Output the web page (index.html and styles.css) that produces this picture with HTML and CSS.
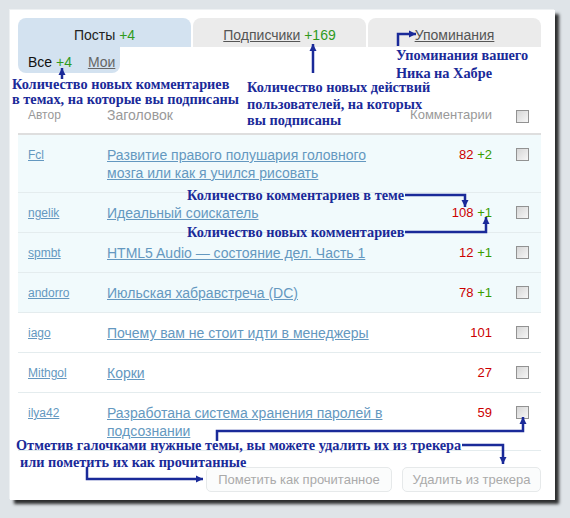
FILE: index.html
```html
<!DOCTYPE html>
<html>
<head>
    <title>Трекер</title>
    <link rel="stylesheet" href="styles.css">
</head>
<body>
<div class="page">
    <div class="panel">
        <div class="tabs">
            <div class="tab active">Посты <span class="plus">+4</span></div>
            <div class="tab"><a href="#">Подписчики</a> <span class="plus">+169</span></div>
            <div class="tab"><a href="#">Упоминания</a></div>
        </div>
        <div class="subtabs">
            <span class="current">Все <span class="plus">+4</span></span>
            <a href="#">Мои</a>
        </div>

        <table class="tracker">
            <thead>
                <tr>
                    <th class="author">Автор</th>
                    <th class="title">Заголовок</th>
                    <th class="count">Комментарии</th>
                    <th class="check"><span class="box"></span></th>
                </tr>
            </thead>
            <tbody>
                <tr class="new">
                    <td class="author"><a href="#">Fcl</a></td>
                    <td class="title"><a href="#">Развитие правого полушария головного мозга или как я учился рисовать</a></td>
                    <td class="count"><span class="total">82</span> <span class="plus">+2</span></td>
                    <td class="check"><span class="box"></span></td>
                </tr>
                <tr class="new">
                    <td class="author"><a href="#">ngelik</a></td>
                    <td class="title"><a href="#">Идеальный соискатель</a></td>
                    <td class="count"><span class="total">108</span> <span class="plus">+1</span></td>
                    <td class="check"><span class="box"></span></td>
                </tr>
                <tr class="new">
                    <td class="author"><a href="#">spmbt</a></td>
                    <td class="title"><a href="#">HTML5 Audio — состояние дел. Часть 1</a></td>
                    <td class="count"><span class="total">12</span> <span class="plus">+1</span></td>
                    <td class="check"><span class="box"></span></td>
                </tr>
                <tr class="new">
                    <td class="author"><a href="#">andorro</a></td>
                    <td class="title"><a href="#">Июльская хабравстреча (DC)</a></td>
                    <td class="count"><span class="total">78</span> <span class="plus">+1</span></td>
                    <td class="check"><span class="box"></span></td>
                </tr>
                <tr>
                    <td class="author"><a href="#">iago</a></td>
                    <td class="title"><a href="#">Почему вам не стоит идти в менеджеры</a></td>
                    <td class="count"><span class="total">101</span></td>
                    <td class="check"><span class="box"></span></td>
                </tr>
                <tr>
                    <td class="author"><a href="#">Mithgol</a></td>
                    <td class="title"><a href="#">Корки</a></td>
                    <td class="count"><span class="total">27</span></td>
                    <td class="check"><span class="box"></span></td>
                </tr>
                <tr>
                    <td class="author"><a href="#">ilya42</a></td>
                    <td class="title"><a href="#">Разработана система хранения паролей в подсознании</a></td>
                    <td class="count"><span class="total">59</span></td>
                    <td class="check"><span class="box"></span></td>
                </tr>
            </tbody>
        </table>

        <div class="actions">
            <button class="btn">Пометить как прочитанное</button>
            <button class="btn">Удалить из трекера</button>
        </div>
    </div>

    <!-- annotations drawn over the screenshot -->
    <div class="notes">
        <svg class="arrows" width="570" height="518" viewBox="0 0 570 518">
            <defs>
                <marker id="head" markerUnits="userSpaceOnUse" markerWidth="8" markerHeight="8" refX="7" refY="4" orient="auto">
                    <path d="M0 0.5 L7 4 L0 7.5 Z" fill="#1a2a99"/>
                </marker>
            </defs>
            <g fill="none" stroke="#1a2a99" stroke-width="2.5" marker-end="url(#head)">
                <path d="M62 79 V68"/>
                <path d="M313 73 V44"/>
                <path d="M398 46 V34 H416"/>
                <path d="M405 195 H465 V207"/>
                <path d="M405 232 H486 V217"/>
                <path d="M217 441 V431 H523 V417"/>
                <path d="M462 445 H503 V464"/>
                <path d="M87 467 V479 H203"/>
            </g>
        </svg>
        <div class="note n1">Количество новых комментариев<br>в темах, на которые вы подписаны</div>
        <div class="note n2">Количество новых действий<br>пользователей, на которых<br>вы подписаны</div>
        <div class="note n3">Упоминания вашего<br>Ника на Хабре</div>
        <div class="note n4">Количество комментариев в теме</div>
        <div class="note n5">Количество новых комментариев</div>
        <div class="note n6">Отметив галочками нужные темы, вы можете удалить их из трекера</div>
        <div class="note n7">или пометить их как прочитанные</div>
    </div>
</div>
</body>
</html>
```

FILE: styles.css
```css
/* page frame */
body {
    margin: 0;
    background: #dfe4e8;
    font-family: "Liberation Sans", Arial, sans-serif;
}

.page {
    position: relative;
    width: 570px;
    height: 518px;
    overflow: hidden;
}

.panel {
    margin: 10px 0 0 10px;
    width: 523px;
    height: 474px;
    padding: 8px 14px 8px 8px;
    background: #fff;
    box-shadow: -1px -1px 0 #eef1f3, 4px 4px 3px rgba(0, 0, 0, 0.8);
}

/* tabs */
.tabs {
    display: flex;
    gap: 2px;
}

.tab {
    flex: 1;
    height: 21px;
    padding-top: 8px;
    line-height: 18px;
    font-size: 14px;
    text-align: center;
    color: #222;
    background: #ebebeb;
    border-radius: 8px 8px 0 0;
}

.tab.active {
    background: #d3e2f0;
}

.tab a {
    color: #555;
}

.plus {
    color: #2f9a1c;
}

.subtabs {
    width: 92px;
    height: 20px;
    padding: 6px 0 0 10px;
    line-height: 18px;
    font-size: 14px;
    background: #d3e2f0;
    border-radius: 0 0 8px 8px;
}

.subtabs .current {
    color: #111;
}

.subtabs a {
    margin-left: 12px;
    color: #666;
}

/* tracker table */
.tracker {
    width: 100%;
    border-collapse: collapse;
}

.tracker th {
    padding: 33px 0 9px;
    line-height: 18px;
    font-size: 13px;
    font-weight: normal;
    color: #999;
    text-align: left;
    border-bottom: 2px solid #dedede;
}

.tracker td {
    padding: 11px 0 10px;
    line-height: 18px;
    vertical-align: top;
    border-bottom: 1px solid #e4ecee;
}

.tracker tr.new td {
    background: #f1fafc;
}

.tracker .author {
    width: 79px;
    padding-left: 10px;
    font-size: 12px;
}

.tracker .title {
    padding-right: 10px;
    font-size: 14px;
}

.tracker .count {
    width: 90px;
    padding-right: 13px;
    font-size: 13px;
    text-align: right;
}

.tracker th.count {
    text-align: right;
}

.tracker .check {
    width: 25px;
    padding-left: 11px;
}

.tracker a {
    color: #6498c0;
}

.tracker .total {
    color: #cc0000;
}

.tracker .plus {
    color: #3a9c00;
}

.box {
    display: block;
    width: 11px;
    height: 11px;
    margin-top: 2px;
    border: 1px solid #929292;
    background: linear-gradient(135deg, #d6d6d6, #f7f7f7);
}

/* buttons */
.actions {
    display: flex;
    justify-content: flex-end;
    gap: 10px;
    margin-top: 16px;
}

.btn {
    height: 25px;
    padding: 0;
    font-family: "Liberation Sans", Arial, sans-serif;
    font-size: 13px;
    color: #aaa;
    white-space: nowrap;
    background: #fbfcfc;
    border: 1px solid #e6e9ea;
    border-radius: 5px;
}

.btn:first-child {
    width: 186px;
}

.btn:last-child {
    width: 139px;
}

/* annotations */
.notes {
    position: absolute;
    top: 0;
    left: 0;
    width: 570px;
    height: 518px;
    pointer-events: none;
}

.arrows {
    position: absolute;
    top: 0;
    left: 0;
}

.note {
    position: absolute;
    font-family: "Liberation Serif", "Times New Roman", serif;
    font-size: 14.3px;
    font-weight: bold;
    line-height: 16px;
    color: #1a2a99;
    white-space: nowrap;
}

.n1 { left: 12px; top: 77px; line-height: 15px; }
.n2 { left: 247px; top: 79px; line-height: 16.5px; }
.n3 { left: 396px; top: 46px; line-height: 18px; }
.n4 { left: 187px; top: 187px; }
.n5 { left: 187px; top: 224px; }
.n6 { left: 16px; top: 437px; }
.n7 { left: 20px; top: 454px; }
```
